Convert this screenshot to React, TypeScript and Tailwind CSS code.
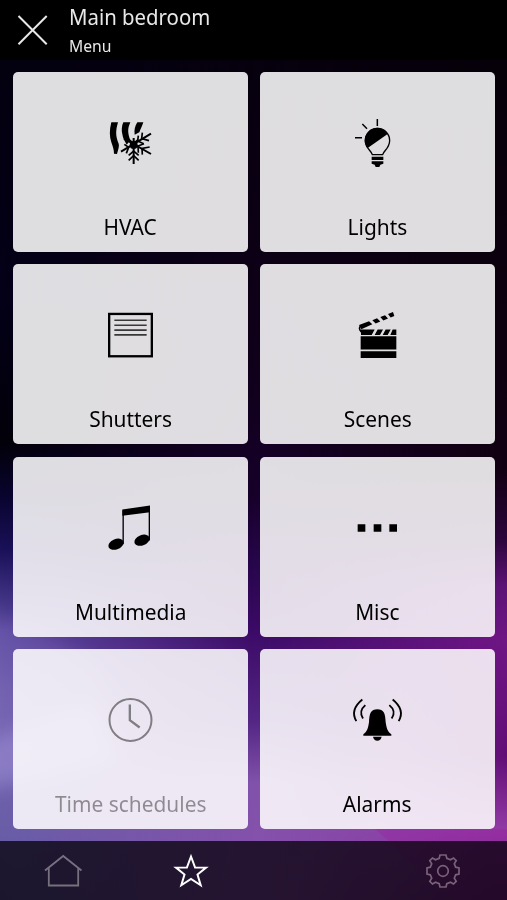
import type { ReactNode } from 'react';

type Tile = {
  label: string;
  viewBox: string;
  icon: ReactNode;
  disabled?: boolean;
};

const tiles: Tile[] = [
  {
    label: 'HVAC',
    viewBox: '3 0 240 210',
    icon: (
      <>
        {/* Heat waves */}
        <path d="M64 52L84 52C77 76 76 92 86 116C88 124 85 132 81 147L72 146C72 134 69 126 64 112C58 94 58 75 64 52Z" />
        <path d="M100 52L121 52C112 72 113 84 121 106L110 119C104 108 99 101 97 88C94 76 95 63 100 52Z" />
        <path d="M142 52L160 52C156 64 152 72 148 82L134 89C132 73 135 64 142 52Z" />
        {/* Snowflake */}
        <g fill="none" stroke="currentColor" strokeWidth="6">
          <path d="M131 99V177M93 140L183 86M102 101L183 147" />
          <path d="M116 166L131 152L146 166M116 151L131 138L146 151M116 103L131 115L145 103" strokeWidth="5" />
          <path d="M157 83L155 101L177 107M145 92L143 108L161 116M157 149L156 130L179 126M145 143L144 123L162 116M109 145L116 127L103 118" strokeWidth="5" />
        </g>
        <circle cx="131" cy="120" r="12" />
      </>
    ),
  },
  {
    label: 'Lights',
    viewBox: '-6 0 240 210',
    icon: (
      <>
        <path d="M97 149C94 137 77 131 76 107A36.500 36.500 0 0 1 149 107C148 131 131 137 128 149Z" fill="none" stroke="currentColor" strokeWidth="4" />
        <path d="M82 130C77 122 74 115 74 107A38 38 0 0 1 144 86Z" />
        <path d="M112 42V63M67 57L81 71M45 98H66" fill="none" stroke="currentColor" strokeWidth="4.500" />
        <path d="M95 155H130V165H95ZM95 169H130V176L121 179L118 186H107L104 179L95 176Z" />
      </>
    ),
  },
  {
    label: 'Shutters',
    viewBox: '3 -7.8 240 210',
    icon: (
      <g fill="none" stroke="currentColor">
        <rect x="57.500" y="43" width="128" height="127" strokeWidth="7" />
        <path d="M73 62H170M73 77H170M73 91.500H170M73 106H170" strokeWidth="5" opacity="0.75" />
      </g>
    ),
  },
  {
    label: 'Scenes',
    viewBox: '-6 -7.8 240 210',
    icon: (
      <>
        <path d="M62 110H169V150H62ZM62 155H169V175H62Z" />
        {/* Lower clapper */}
        <path d="M63 90H104L95 106H63ZM113 90H129L120 106H104ZM137 90H152L143 106H128ZM158 90H169V106H151Z" />
        {/* Raised clapper */}
        <path d="M57 76L87 65L97 74L64 89ZM97 62L111 56L121 66L107 72ZM121 52L135 47L144 57L130 63ZM144 43L159 37L163 49L152 54Z" />
        <path d="M64 78Q53 85 64 97" fill="none" stroke="currentColor" strokeWidth="5" />
      </>
    ),
  },
  {
    label: 'Multimedia',
    viewBox: '3 -0.6 240 210',
    icon: (
      <>
        <path d="M97 58L180 46V66L97 77Z" />
        <path d="M99.500 60V162M178 48V151" fill="none" stroke="currentColor" strokeWidth="4" />
        <ellipse cx="78" cy="162" rx="24" ry="15.500" transform="rotate(-22 78 162)" />
        <ellipse cx="156" cy="150" rx="24" ry="15.500" transform="rotate(-22 156 150)" />
      </>
    ),
  },
  {
    label: 'Misc',
    viewBox: '-6 -45.6 240 210',
    icon: <path d="M53 57H76V80H53ZM101 57H124V80H101ZM148 57H171V80H148Z" />,
  },
  {
    label: 'Time schedules',
    viewBox: '3 -8.4 240 210',
    disabled: true,
    icon: (
      <g fill="none" stroke="currentColor" strokeWidth="6">
        <circle cx="121.500" cy="105.500" r="63" />
        <path d="M119.500 59V106L149 128" strokeWidth="7" />
      </g>
    ),
  },
  {
    label: 'Alarms',
    viewBox: '-6 -8.4 240 210',
    icon: (
      <>
        <path d="M70 153V148C81 140 84 132 87 112C88 84 93 73 112 73C131 73 136 84 137 112C140 132 143 140 154 148V153Z" />
        <path d="M99 156H125C123 164 119 168 112 168C105 168 101 164 99 156Z" />
        <g fill="none" stroke="currentColor" strokeWidth="5.500">
          <path d="M67 44Q29 75 49 109M76 61Q55 79 69 101M158 44Q196 75 176 109M148 61Q170 79 155 101" />
        </g>
      </>
    ),
  },
];

const Wallpaper = () => (
  <svg className="absolute inset-0 -z-10 h-full w-full" viewBox="0 0 507 900" preserveAspectRatio="none">
    <defs>
      <linearGradient id="left" gradientUnits="userSpaceOnUse" x1="0" y1="0" x2="0" y2="900">
        <stop offset="0" stopColor="#04000e" />
        <stop offset="0.33" stopColor="#030018" />
        <stop offset="0.49" stopColor="#020008" />
        <stop offset="0.55" stopColor="#08042e" />
        <stop offset="0.61" stopColor="#191058" />
        <stop offset="0.7" stopColor="#5a49a0" />
        <stop offset="0.8" stopColor="#7666b2" />
        <stop offset="1" stopColor="#6058a0" />
      </linearGradient>
      <linearGradient id="middle" gradientUnits="userSpaceOnUse" x1="0" y1="0" x2="0" y2="900">
        <stop offset="0" stopColor="#05000c" />
        <stop offset="0.4" stopColor="#10001a" />
        <stop offset="0.55" stopColor="#17002a" />
        <stop offset="0.63" stopColor="#28064c" />
        <stop offset="0.7" stopColor="#3c0a66" />
        <stop offset="0.8" stopColor="#532584" />
        <stop offset="0.87" stopColor="#8152aa" />
        <stop offset="1" stopColor="#8850ac" />
      </linearGradient>
      <linearGradient id="right" gradientUnits="userSpaceOnUse" x1="0" y1="0" x2="0" y2="900">
        <stop offset="0" stopColor="#040008" />
        <stop offset="0.52" stopColor="#120012" />
        <stop offset="0.6" stopColor="#2d063c" />
        <stop offset="0.65" stopColor="#5d1275" />
        <stop offset="0.71" stopColor="#6f1685" />
        <stop offset="0.84" stopColor="#620e76" />
        <stop offset="0.92" stopColor="#9138a4" />
        <stop offset="1" stopColor="#7c2488" />
      </linearGradient>
      <linearGradient id="fadeLeft">
        <stop offset="0" stopColor="#fff" />
        <stop offset="0.5" stopColor="#000" />
      </linearGradient>
      <linearGradient id="fadeRight">
        <stop offset="0.52" stopColor="#000" />
        <stop offset="1" stopColor="#fff" />
      </linearGradient>
      <mask id="maskLeft">
        <rect width="507" height="900" fill="url(#fadeLeft)" />
      </mask>
      <mask id="maskRight">
        <rect width="507" height="900" fill="url(#fadeRight)" />
      </mask>
      <filter id="soft" x="-40%" y="-40%" width="180%" height="180%">
        <feGaussianBlur stdDeviation="9" />
      </filter>
    </defs>
    <rect width="507" height="900" fill="url(#middle)" />
    <rect width="507" height="900" fill="url(#left)" mask="url(#maskLeft)" />
    <rect width="507" height="900" fill="url(#right)" mask="url(#maskRight)" />
    {/* Light swirls */}
    <path d="M-20 615Q30 620 100 665L120 740L-20 700Z" fill="#8c7cc4" opacity="0.2" filter="url(#soft)" />
    <path d="M-20 745Q20 725 90 705L120 760L-20 790Z" fill="#b0a0e6" opacity="0.4" filter="url(#soft)" />
    <path d="M375 829C400 850 425 878 455 900H507V829Z" fill="#a01ca0" opacity="0.3" />
  </svg>
);

export default function App() {
  return (
    <div className="relative isolate flex h-[900px] w-[507px] flex-col overflow-hidden bg-black font-['Noto_Sans','Open_Sans',sans-serif]">
      <Wallpaper />

      <header className="flex h-[60px] shrink-0 items-start bg-black text-[#e8e8e8]">
        <svg className="mt-[15px] ml-[17px] h-[31px] w-[31px]" viewBox="0 0 31 31" fill="none" stroke="currentColor" strokeWidth="2">
          <path d="M1.500 1L29.700 29.200M29.700 1L1.500 29.200" />
        </svg>
        <div className="ml-[21px] pt-[3px]">
          <h1 className="origin-left scale-x-[0.97] text-[21px] leading-[28px]">Main bedroom</h1>
          <p className="mt-[4px] origin-left scale-x-[0.98] text-[16px] leading-[22px]">Menu</p>
        </div>
      </header>

      <main className="grid h-[781px] shrink-0 grid-cols-2 grid-rows-4 gap-x-3 gap-y-[12.4px] pt-3 pr-[12px] pb-[12px] pl-[13px]">
        {tiles.map((tile) => (
          <button
            key={tile.label}
            disabled={tile.disabled}
            className="flex flex-col items-center rounded-[5px] bg-[#fffeff]/87 pt-[33px] text-black"
          >
            <svg
              className={tile.disabled ? 'h-[70px] w-20 opacity-45' : 'h-[70px] w-20'}
              viewBox={tile.viewBox}
              fill="currentColor"
            >
              {tile.icon}
            </svg>
            <span
              className={
                tile.disabled
                  ? 'mt-[36px] scale-x-95 text-[22px] leading-[30px] opacity-40'
                  : 'mt-[36px] scale-x-95 text-[22px] leading-[30px]'
              }
            >
              {tile.label}
            </span>
          </button>
        ))}
      </main>

      <footer className="flex flex-1 items-start bg-[#040008]/75 pt-[12px]">
        <svg className="ml-[43px] h-10 w-10 text-[#77707f]" viewBox="0 0 40 40" fill="none" stroke="currentColor" strokeWidth="1.8">
          <path d="M2 17.500L20.200 3L38.500 17.500M5.800 15V32.500H35.200V15" />
        </svg>
        <svg className="ml-[88px] h-10 w-10 text-white" viewBox="0 0 40 40" fill="none" stroke="currentColor" strokeWidth="2">
          <path d="M20 3.500L24.100 14.500L35 14.600L26.500 21.500L29.700 32.300L20 26L10.300 32.300L13.500 21.500L5 14.600L15.900 14.500Z" />
        </svg>
        <svg className="ml-[212px] h-10 w-10 text-[#786279]" viewBox="0 0 40 40" fill="none" stroke="currentColor" strokeWidth="1.7">
          <circle cx="20" cy="18" r="5.300" />
          <path d="M17 2H23L23.800 5.300L27.500 6.800L30.500 5L33.200 7.700L31.300 10.800L32.700 14.200L36 15V21L32.700 21.800L31.300 25.200L33.200 28.300L30.500 31L27.500 29.200L23.800 30.700L23 34H17L16.200 30.700L12.500 29.200L9.500 31L6.800 28.300L8.700 25.200L7.300 21.800L4 21V15L7.300 14.200L8.700 10.800L6.800 7.700L9.500 5L12.500 6.800L16.200 5.300Z" />
        </svg>
      </footer>
    </div>
  );
}
